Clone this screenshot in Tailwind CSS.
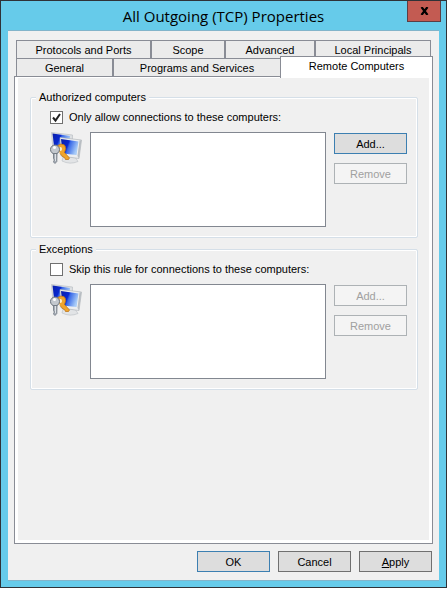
<!DOCTYPE html>
<html lang="en">
<head>
  <meta charset="utf-8">
  <meta name="viewport" content="width=device-width, initial-scale=1">
  <title>All Outgoing (TCP) Properties</title>
  <script src="https://cdn.jsdelivr.net/npm/@tailwindcss/browser@4"></script>
</head>
<body class="flex min-h-screen flex-col bg-white pb-px font-['Liberation_Sans',sans-serif] text-[11px] leading-4 text-black">

  <!-- shared icon: two monitors with keys -->
  <svg class="absolute size-0" aria-hidden="true">
    <defs>
      <linearGradient id="blue" x1="0" y1="0" x2="1" y2="0.35">
        <stop offset="0" stop-color="#0a1fa8" />
        <stop offset="0.45" stop-color="#0828d0" />
        <stop offset="0.55" stop-color="#3a6ae8" />
        <stop offset="1" stop-color="#a8ccf8" />
      </linearGradient>
      <symbol id="computers" viewBox="0 0 34 34">
        <path d="M1.500 .5 L22.500 3 L22 20 L3 18Z" fill="#dde0e3" stroke="#b4b9be" stroke-width=".6" />
        <path d="M2.500 1.500 L20 4 L19.500 16 L4 14Z" fill="url(#blue)" />
        <path d="M13 25 L25 25 L28 29.500 Q20 33 12 29Z" fill="#e2e4e6" stroke="#b9bec3" stroke-width=".6" />
        <path d="M10 5.500 L31.500 8 L29 26.500 L11 24Z" fill="#eceef0" stroke="#a9aeb4" stroke-width=".6" />
        <path d="M11 7 L28.500 9.500 L26.500 23 L12.500 21.500Z" fill="url(#blue)" />
        <path d="M29.500 8.500 L31.500 8 L29 26.500 L27.500 24Z" fill="#b8bdc2" />
        <path d="M7 14 Q11 10.500 14.500 13 Q17 16 14.500 20.500 L19.500 26 L18.500 27.500 L15.500 27.500 L14.500 25.500 L13 25 L10 21.500" fill="#f0a52c" stroke="#b96d10" stroke-width=".7" />
        <ellipse cx="10.500" cy="17" rx="1.500" ry="2" fill="#fff1cf" />
        <circle cx="5" cy="17.500" r="4.500" fill="#c3c8ce" stroke="#6a727c" stroke-width="1" />
        <path d="M3.500 21.500 L7 21.500 L6.800 29.500 L5 31.500 L3.500 30 L4.300 28 L3.500 26.500Z" fill="#a9afb8" stroke="#6a727c" stroke-width=".8" />
        <circle cx="4.500" cy="15.500" r="1.500" fill="#fff" />
        <path d="M5.500 22 V29" stroke="#eef0f2" stroke-width=".8" />
      </symbol>
    </defs>
  </svg>

  <div class="flex flex-1 flex-col border border-[#2f3237] bg-[#66cbea]">
    <header class="relative flex h-[29px] items-center justify-center">
      <h1 class="font-['Open_Sans',sans-serif] text-[15px] leading-5">All Outgoing (TCP) Properties</h1>
      <button aria-label="Close" class="absolute top-0 right-[5px] flex h-[21px] w-[34px] items-center justify-center border border-t-0 border-[#5c3d44] bg-[#c35b52]">
        <svg class="h-[8px] w-[9px]" viewBox="0 0 9 8"><path d="M1.500 0 L7.500 8 M7.500 0 L1.500 8" stroke="#000" stroke-width="2.200" /></svg>
      </button>
    </header>

    <main class="mx-[7px] mb-[6px] flex flex-1 flex-col border-y border-[#82b4ca] bg-[#f0f0f0] px-[6px] pt-[9px] pb-2">
      <nav>
        <div class="flex h-[18px] px-[2px]">
          <button class="grow basis-[135px] border-t border-x border-[#898c95] bg-[#ebebeb]">Protocols and Ports</button>
          <button class="grow basis-[74px] border-t border-x border-[#898c95] bg-[#ebebeb]">Scope</button>
          <button class="grow basis-[90px] border-t border-x border-[#898c95] bg-[#ebebeb]">Advanced</button>
          <button class="grow basis-[116px] border-t border-x border-[#898c95] bg-[#ebebeb]">Local Principals</button>
        </div>
        <div class="flex h-[18px] pl-[2px]">
          <button class="grow basis-[97px] border-t border-x border-[#898c95] bg-[#ebebeb]">General</button>
          <button class="grow basis-[167px] border-t border-l border-[#898c95] bg-[#ebebeb]">Programs and Services</button>
          <button class="z-10 -mt-[2px] -mb-[2px] grow basis-[153px] border-t border-x border-[#898c95] bg-white pb-[3px]">Remote Computers</button>
        </div>
      </nav>

      <section class="flex flex-1 flex-col border border-[#898c95] bg-[#f0f0f0]">
        <div class="flex-1 border-x-[3px] border-t border-b-[3px] border-white pt-[11px] pr-[11px] pl-3">
          <fieldset class="mb-[3px] rounded-xs border border-[#d5dfe8] pr-[10px] pb-[10px] pl-[19px] shadow-[inset_0_0_0_1px_#fff]">
            <legend class="-ml-[14px] bg-[#f0f0f0] px-[3px]">Authorized computers</legend>
            <label class="mt-[4px] flex items-center gap-[6px]">
              <span class="grid">
                <input type="checkbox" checked class="peer col-start-1 row-start-1 size-[13px] appearance-none border border-[#707070] bg-white">
                <svg class="pointer-events-none invisible col-start-1 row-start-1 size-[13px] peer-checked:visible" viewBox="0 0 13 13"><path d="M3 6.500 L5.500 9.500 L10 3" fill="none" stroke="#212121" stroke-width="2" /></svg>
              </span>
              Only allow connections to these computers:
            </label>
            <div class="mt-[7px] flex">
              <svg class="h-[34px] w-[34px] shrink-0"><use href="#computers" /></svg>
              <select multiple aria-label="Authorized computers" class="mr-2 ml-[6px] h-[95px] min-w-0 flex-1 appearance-none border border-[#828790] bg-white"></select>
              <div class="flex flex-col gap-[9px] pt-px">
                <button class="h-[21px] w-[73px] border border-[#3c7fb1] bg-[#dddddd]">Add...</button>
                <button disabled class="h-[21px] w-[73px] border border-[#adb2b5] bg-[#f4f4f4] text-[#a0a0a0]">Remove</button>
              </div>
            </div>
          </fieldset>

          <fieldset class="rounded-xs border border-[#d5dfe8] pr-[10px] pb-[10px] pl-[19px] shadow-[inset_0_0_0_1px_#fff]">
            <legend class="-ml-[14px] bg-[#f0f0f0] px-[3px]">Exceptions</legend>
            <label class="mt-[4px] flex items-center gap-[6px]">
              <span class="grid">
                <input type="checkbox" class="peer col-start-1 row-start-1 size-[13px] appearance-none border border-[#707070] bg-white">
                <svg class="pointer-events-none invisible col-start-1 row-start-1 size-[13px] peer-checked:visible" viewBox="0 0 13 13"><path d="M3 6.500 L5.500 9.500 L10 3" fill="none" stroke="#212121" stroke-width="2" /></svg>
              </span>
              Skip this rule for connections to these computers:
            </label>
            <div class="mt-[7px] flex">
              <svg class="h-[34px] w-[34px] shrink-0"><use href="#computers" /></svg>
              <select multiple aria-label="Exceptions" class="mr-2 ml-[6px] h-[95px] min-w-0 flex-1 appearance-none border border-[#828790] bg-white"></select>
              <div class="flex flex-col gap-[9px] pt-px">
                <button disabled class="h-[21px] w-[73px] border border-[#adb2b5] bg-[#f4f4f4] text-[#a0a0a0]">Add...</button>
                <button disabled class="h-[21px] w-[73px] border border-[#adb2b5] bg-[#f4f4f4] text-[#a0a0a0]">Remove</button>
              </div>
            </div>
          </fieldset>
        </div>
      </section>

      <footer class="mt-[7px] flex justify-end gap-2 pr-px">
        <button class="h-[21px] w-[73px] border border-[#3c7fb1] bg-[#dddddd]">OK</button>
        <button class="h-[21px] w-[73px] border border-[#707070] bg-[#dddddd]">Cancel</button>
        <button class="h-[21px] w-[73px] border border-[#707070] bg-[#dddddd]"><u>A</u>pply</button>
      </footer>
    </main>
  </div>
</body>
</html>
